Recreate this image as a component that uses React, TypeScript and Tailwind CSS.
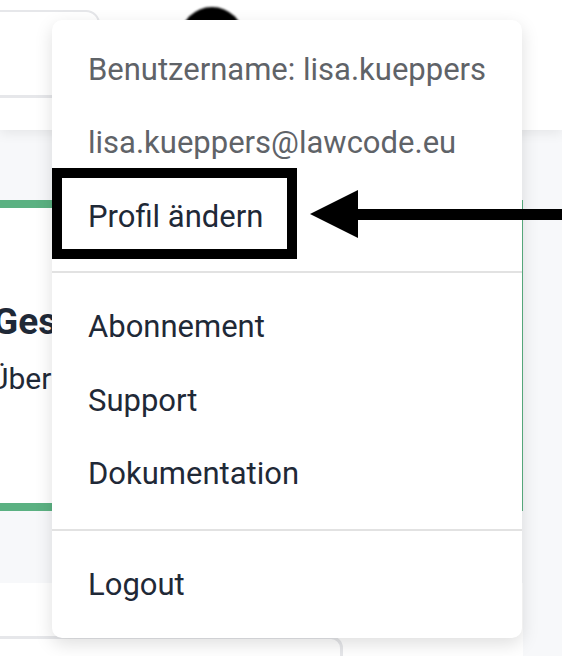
import React from 'react';

const font = { fontFamily: 'Roboto, "Liberation Sans", sans-serif' };

const infoItems = ['Benutzername: lisa.kueppers', 'lisa.kueppers@lawcode.eu'];
const linkItems = ['Abonnement', 'Support', 'Dokumentation'];

function MenuItem({ label, muted }: { label: string; muted?: boolean }) {
  return (
    <div
      className={
        'h-[73.5px] flex items-center pl-[36px] pr-[37px] text-[31px] whitespace-nowrap ' +
        (muted ? 'text-[#5f6368]' : 'text-[#1f2937]')
      }
    >
      {label}
    </div>
  );
}

function Divider() {
  return <div className="my-[17.5px] h-[2px] bg-[#e2e2e2]" />;
}

export default function App() {
  return (
    <div className="relative w-[562px] h-[656px] overflow-hidden bg-[#f7f8fa]" style={font}>
      {/* header */}
      <header className="relative z-10 h-[130px] bg-white flex items-start shadow-[0_3px_12px_rgba(0,0,0,0.08)]">
        <div className="ml-[-20px] mt-[10px] w-[120px] h-[88px] bg-white border-2 border-b-[3px] border-[#e6e7ea] rounded-[14px]" />
        <div className="ml-[80px] mt-[7px] w-[64px] h-[64px] rounded-full bg-black blur-[1px]" />
      </header>

      {/* page content behind the menu */}
      <main className="pt-[70px]">
        <div className="ml-[-40px] w-[563px] h-[311px] bg-white border-t-[8px] border-b-[8px] border-r-2 border-[#5bb182] pl-[33px] pt-[92px]">
          <h1 className="text-[37px] leading-[44px] font-bold text-[#1f2937] whitespace-nowrap">Gesellschaften</h1>
          <p className="mt-[18px] ml-[-4px] text-[30px] leading-[34px] text-[#1f2937] whitespace-nowrap">Übersicht aller Gesellschaften</p>
        </div>
        <div className="mt-[72px] w-[523px] h-[100px] bg-white pt-[53px]">
          <div className="ml-[-40px] w-[383px] h-[60px] bg-white border-[3px] border-[#e6e7ea] rounded-tr-[12px]" />
        </div>
      </main>

      {/* user dropdown */}
      <div className="absolute z-20 left-[52px] top-[20px] w-[470px] h-[618px] bg-white rounded-[10px] shadow-[0_6px_18px_rgba(0,0,0,0.13)] pt-[13px]">
        {infoItems.map((item) => (
          <MenuItem key={item} label={item} muted />
        ))}
        <MenuItem label="Profil ändern" />
        <Divider />
        {linkItems.map((item) => (
          <MenuItem key={item} label={item} />
        ))}
        <Divider />
        <MenuItem label="Logout" />
      </div>

      {/* annotation: box + arrow */}
      <div className="absolute z-30 left-[52px] top-[168px] w-[245px] h-[91px] border-[10px] border-black" />
      <svg className="absolute z-30 left-0 top-0" width="562" height="656" viewBox="0 0 562 656">
        <polygon points="310,214 358,190 358,238" fill="#000" />
        <rect x="355" y="209" width="207" height="11" fill="#000" />
      </svg>
    </div>
  );
}
